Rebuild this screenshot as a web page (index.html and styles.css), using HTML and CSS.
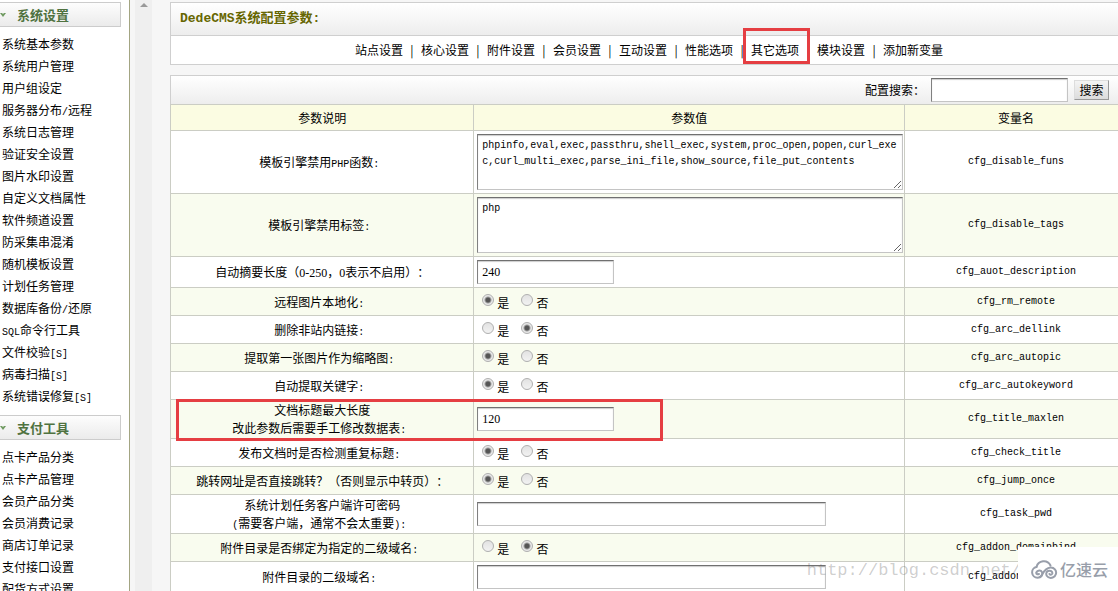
FILE: index.html
```html
<!DOCTYPE html>
<html lang="zh-CN">
<head>
<meta charset="utf-8">
<title>DedeCMS系统配置参数</title>
<link rel="stylesheet" href="styles.css">
</head>
<body>
<div class="app">
  <nav class="sidebar">
    <h2 class="group"><svg class="chevron" viewBox="0 0 6 4"><path d="M0 0H2L3 1L4 0H6L3 4Z"/></svg>系统设置</h2>
    <ul class="links">
      <li><a href="#">系统基本参数</a></li>
      <li><a href="#">系统用户管理</a></li>
      <li><a href="#">用户组设定</a></li>
      <li><a href="#">服务器分布<span class="lat">/</span>远程</a></li>
      <li><a href="#">系统日志管理</a></li>
      <li><a href="#">验证安全设置</a></li>
      <li><a href="#">图片水印设置</a></li>
      <li><a href="#">自定义文档属性</a></li>
      <li><a href="#">软件频道设置</a></li>
      <li><a href="#">防采集串混淆</a></li>
      <li><a href="#">随机模板设置</a></li>
      <li><a href="#">计划任务管理</a></li>
      <li><a href="#">数据库备份<span class="lat">/</span>还原</a></li>
      <li><a href="#"><span class="lat">SQL</span>命令行工具</a></li>
      <li><a href="#">文件校验<span class="lat">[S]</span></a></li>
      <li><a href="#">病毒扫描<span class="lat">[S]</span></a></li>
      <li><a href="#">系统错误修复<span class="lat">[S]</span></a></li>
    </ul>
    <h2 class="group"><svg class="chevron" viewBox="0 0 6 4"><path d="M0 0H2L3 1L4 0H6L3 4Z"/></svg>支付工具</h2>
    <ul class="links">
      <li><a href="#">点卡产品分类</a></li>
      <li><a href="#">点卡产品管理</a></li>
      <li><a href="#">会员产品分类</a></li>
      <li><a href="#">会员消费记录</a></li>
      <li><a href="#">商店订单记录</a></li>
      <li><a href="#">支付接口设置</a></li>
      <li><a href="#">配货方式设置</a></li>
    </ul>
  </nav>
  <div class="track"><svg class="up" viewBox="0 0 8 4"><path d="M0 4L4 0L8 4Z"/></svg></div>
  <main class="content">
    <section class="panel">
      <h1 class="title">DedeCMS系统配置参数:</h1>
      <nav class="tabs">
        <a href="#">站点设置</a><span class="bar">|</span>
        <a href="#">核心设置</a><span class="bar">|</span>
        <a href="#">附件设置</a><span class="bar">|</span>
        <a href="#">会员设置</a><span class="bar">|</span>
        <a href="#">互动设置</a><span class="bar">|</span>
        <a href="#">性能选项</a><span class="bar">|</span>
        <a href="#" class="marked">其它选项</a><span class="bar">|</span>
        <a href="#">模块设置</a><span class="bar">|</span>
        <a href="#">添加新变量</a>
      </nav>
    </section>
    <section class="config">
      <form class="search">
        <label for="q">配置搜索：</label>
        <input class="field short" id="q" type="text">
        <button class="go" type="button">搜索</button>
      </form>
      <table class="params">
        <colgroup><col class="c-desc"><col class="c-value"><col class="c-name"></colgroup>
        <thead><tr><th>参数说明</th><th>参数值</th><th>变量名</th></tr></thead>
        <tbody>
          <tr class="area">
            <td><label for="funs">模板引擎禁用<span class="lat">PHP</span>函数<span class="lat">:</span></label></td>
            <td><textarea class="field" id="funs">phpinfo,eval,exec,passthru,shell_exec,system,proc_open,popen,curl_exec,curl_multi_exec,parse_ini_file,show_source,file_put_contents</textarea></td>
            <td>cfg_disable_funs</td>
          </tr>
          <tr class="area">
            <td><label for="tags">模板引擎禁用标签<span class="lat">:</span></label></td>
            <td><textarea class="field" id="tags">php</textarea></td>
            <td>cfg_disable_tags</td>
          </tr>
          <tr class="line">
            <td><label for="auot">自动摘要长度（<span class="num">0-250</span>，<span class="num">0</span>表示不启用）：</label></td>
            <td><input class="field short" id="auot" type="text" value="240"></td>
            <td>cfg_auot_description</td>
          </tr>
          <tr>
            <td>远程图片本地化<span class="lat">:</span></td>
            <td><div class="choice"><label><input type="radio" name="rm" checked><span>是</span></label><label><input type="radio" name="rm"><span>否</span></label></div></td>
            <td>cfg_rm_remote</td>
          </tr>
          <tr>
            <td>删除非站内链接<span class="lat">:</span></td>
            <td><div class="choice"><label><input type="radio" name="dellink"><span>是</span></label><label><input type="radio" name="dellink" checked><span>否</span></label></div></td>
            <td>cfg_arc_dellink</td>
          </tr>
          <tr>
            <td>提取第一张图片作为缩略图<span class="lat">:</span></td>
            <td><div class="choice"><label><input type="radio" name="autopic" checked><span>是</span></label><label><input type="radio" name="autopic"><span>否</span></label></div></td>
            <td>cfg_arc_autopic</td>
          </tr>
          <tr>
            <td>自动提取关键字<span class="lat">:</span></td>
            <td><div class="choice"><label><input type="radio" name="keyword" checked><span>是</span></label><label><input type="radio" name="keyword"><span>否</span></label></div></td>
            <td>cfg_arc_autokeyword</td>
          </tr>
          <tr class="double">
            <td class="marked-row"><label for="maxlen">文档标题最大长度<br>改此参数后需要手工修改数据表<span class="lat">:</span></label></td>
            <td><input class="field short" id="maxlen" type="text" value="120"></td>
            <td>cfg_title_maxlen</td>
          </tr>
          <tr>
            <td>发布文档时是否检测重复标题<span class="lat">:</span></td>
            <td><div class="choice"><label><input type="radio" name="check" checked><span>是</span></label><label><input type="radio" name="check"><span>否</span></label></div></td>
            <td>cfg_check_title</td>
          </tr>
          <tr>
            <td>跳转网址是否直接跳转？（否则显示中转页）：</td>
            <td><div class="choice"><label><input type="radio" name="jump" checked><span>是</span></label><label><input type="radio" name="jump"><span>否</span></label></div></td>
            <td>cfg_jump_once</td>
          </tr>
          <tr class="double">
            <td><label for="pwd">系统计划任务客户端许可密码<br><span class="lat">(</span>需要客户端，通常不会太重要<span class="lat">):</span></label></td>
            <td><input class="field long" id="pwd" type="text"></td>
            <td>cfg_task_pwd</td>
          </tr>
          <tr>
            <td>附件目录是否绑定为指定的二级域名<span class="lat">:</span></td>
            <td><div class="choice"><label><input type="radio" name="bind"><span>是</span></label><label><input type="radio" name="bind" checked><span>否</span></label></div></td>
            <td>cfg_addon_domainbind</td>
          </tr>
          <tr class="line">
            <td><label for="domain">附件目录的二级域名<span class="lat">:</span></label></td>
            <td><input class="field long" id="domain" type="text"></td>
            <td>cfg_addon_domain</td>
          </tr>
        </tbody>
      </table>
    </section>
  </main>
  <div class="watermark">http://blog.csdn.net/</div>
  <div class="brand">
    <svg class="cloud" viewBox="0 0 27 20"><g fill="none" stroke="#989eaa" stroke-width="2" stroke-linecap="round"><path d="M5.500 8A7.500 7.500 0 0 1 19.500 6.500"/><path d="M5.500 8A5.400 5.400 0 0 0 6.500 18.700C10.500 18.700 12 15.500 11 13.200C10 10.800 6.500 10.800 5.300 13.500C5 15 6.500 15.500 8 15"/><path d="M9 18C12 16.500 12 9.500 19.500 8.500A5.200 5.200 0 1 1 17 18C14.500 16.500 14.700 13 17 12C19.500 11 21.700 12.500 21.300 14.500C20.800 16 19 16 18.500 15"/></g></svg>
    <span>亿速云</span>
  </div>
</div>
</body>
</html>
```

FILE: styles.css
```css
*,
*::after { box-sizing: border-box; }

body {
  margin: 0;
  font: 12px/18px "Noto Sans CJK SC", sans-serif;
  text-spacing-trim: space-all;
  color: #000;
  background: #f6f6f6;
}

a { color: inherit; text-decoration: none; }

.lat { font: 10px/12px "Liberation Mono", monospace; }
.num { font: 12px/12px "Liberation Serif", serif; }

.app {
  position: relative;
  display: flex;
  height: 100vh;
  overflow: hidden;
}

/* Side menu */
.sidebar {
  flex: none;
  width: 130px;
  padding-top: 2px;
  border-right: 1px solid #a3a582;
  background: #fff;
}

.group {
  display: flex;
  align-items: center;
  gap: 11px;
  height: 25px;
  margin: 0 8px 6px 0;
  border: 1px solid #ccc;
  border-left: 0;
  background: linear-gradient(#fdfdfd, #ebebeb);
  font-size: 13px;
  font-weight: bold;
  color: #4f7240;
}

.chevron { width: 6px; height: 4px; fill: #6f9a60; }

.links {
  margin: 0 0 8px;
  padding: 0 0 0 2px;
  list-style: none;
  line-height: 22px;
  white-space: nowrap;
}

.links li { height: 22px; }

.track {
  flex: none;
  width: 17px;
  margin-left: 5px;
  padding-top: 2px;
  background: #efefef;
  line-height: 0;
  text-align: center;
}

.up { width: 8px; height: 4px; fill: #999; }

/* The frame is wider than the visible area and is cut at the right */
.content {
  flex: 1;
  min-width: 0;
  margin: 2px -10px 0 18px;
}

.panel {
  margin-bottom: 10px;
  border: 1px solid #cfcfcf;
  background: #fff;
}

.title {
  height: 33px;
  margin: 0;
  padding-left: 9px;
  border-bottom: 1px solid #cfcfcf;
  background: linear-gradient(#fff, #ededed);
  font: bold 12px/32px "Liberation Mono", "Noto Sans CJK SC", monospace;
  font-size: 13px;
  color: #666600;
}

.tabs {
  display: flex;
  justify-content: center;
  height: 28px;
  line-height: 28px;
}

.bar {
  width: 18px;
  text-align: center;
}

.marked { position: relative; }

.marked::after {
  content: "";
  position: absolute;
  inset: -8px -11px 0 -8px;
  border: 3px solid #e53e42;
}

.config { background: #fff; }

.search {
  display: flex;
  align-items: center;
  justify-content: flex-end;
  gap: 6px;
  height: 29px;
  padding-right: 18px;
  border: 1px solid #cfcfcf;
  border-bottom: 0;
  background: linear-gradient(#fff, #ededed);
}

.field {
  display: block;
  margin: 0;
  padding: 0 4px;
  border: 1px solid #c4c4c4;
  border-top-color: #707070;
  border-left-color: #808080;
  border-radius: 0;
  outline: 0;
  background: #fff;
  box-shadow: inset 0 1px 1px #ccc;
  font: 12px/16px "Liberation Serif", serif;
  color: #000;
}

.short { width: 137px; height: 24px; }
.long { width: 349px; height: 24px; }

textarea.field {
  width: 100%;
  height: 56px;
  padding: 3px 4px;
  overflow: hidden;
  font: 10px/16px "Liberation Mono", monospace;
  word-break: break-all;
}

.go {
  width: 35px;
  height: 20px;
  padding: 0;
  border: 1px solid #ddd;
  border-right-color: #999;
  border-bottom-color: #999;
  background: linear-gradient(#f4f4f4, #dcdcdc);
  font: 12px/18px "Noto Sans CJK SC", sans-serif;
  color: #000;
}

/* Parameters */
.params {
  width: 100%;
  border-collapse: collapse;
  table-layout: fixed;
}

.c-desc { width: 31.700%; }
.c-value { width: 45%; }

.params th,
.params td {
  height: 28px;
  padding: 0;
  border: 1px solid #cbcdc4;
  text-align: center;
}

.params th {
  height: 26px;
  background: #fbfce2;
  font-weight: normal;
}

.params tbody tr:nth-child(even) { background: #f9fcef; }
.params td:first-child .lat:last-child { margin-right: 6px; }
.params td:nth-child(2) { padding: 0 1px 0 3px; text-align: left; }
.params td:nth-child(3) { font: 10px/18px "Liberation Mono", monospace; }
.params .area td { height: 63px; }
.params .line td { height: 31px; }
.params .double td { height: 39px; }

.marked-row { position: relative; }

.marked-row::after {
  content: "";
  position: absolute;
  top: -1px;
  left: 5px;
  width: 487px;
  height: 42px;
  border: 3px solid #e53e42;
  pointer-events: none;
}

.choice {
  display: flex;
  gap: 12px;
  padding-left: 5px;
}

.choice label {
  display: flex;
  gap: 3px;
  height: 15px;
  line-height: 12px;
}

.choice span { align-self: flex-end; }

.choice input {
  appearance: none;
  width: 12px;
  height: 12px;
  margin: 0;
  border: 1px solid #b0b0b0;
  border-radius: 50%;
  background: linear-gradient(#e2e2e2, #f2f2f2);
}

.choice input:checked {
  background: radial-gradient(circle, #555 0 2px, #e8e8e8 4px);
}

/* Marks over the page */
.watermark {
  position: absolute;
  right: 97px;
  bottom: 8px;
  font: 17px/24px "Liberation Mono", monospace;
  color: rgba(90, 90, 90, 0.3);
}

.brand {
  position: absolute;
  right: 0;
  bottom: 0;
  display: flex;
  align-items: center;
  gap: 2px;
  width: 100px;
  height: 44px;
  padding-left: 13px;
  background: #fff;
  font-size: 16px;
  font-weight: 500;
  color: #989eaa;
  white-space: nowrap;
}

.cloud { flex: none; width: 27px; height: 20px; }
```
